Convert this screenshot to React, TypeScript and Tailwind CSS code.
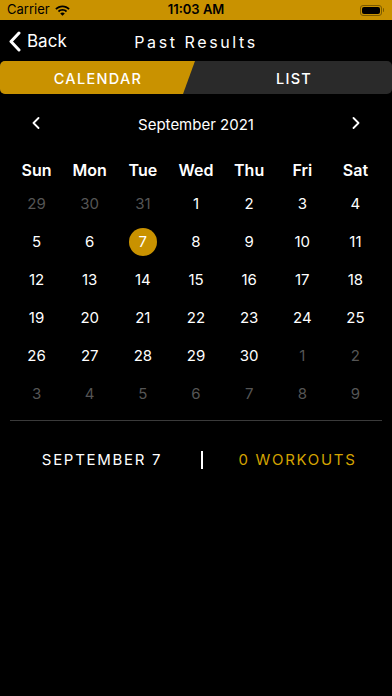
const GOLD = 'bg-[#c99200]'

type Day = { n: number; muted?: boolean }

const weeks: Day[][] = [
  [{ n: 29, muted: true }, { n: 30, muted: true }, { n: 31, muted: true }, { n: 1 }, { n: 2 }, { n: 3 }, { n: 4 }],
  [{ n: 5 }, { n: 6 }, { n: 7 }, { n: 8 }, { n: 9 }, { n: 10 }, { n: 11 }],
  [{ n: 12 }, { n: 13 }, { n: 14 }, { n: 15 }, { n: 16 }, { n: 17 }, { n: 18 }],
  [{ n: 19 }, { n: 20 }, { n: 21 }, { n: 22 }, { n: 23 }, { n: 24 }, { n: 25 }],
  [{ n: 26 }, { n: 27 }, { n: 28 }, { n: 29 }, { n: 30 }, { n: 1, muted: true }, { n: 2, muted: true }],
  [3, 4, 5, 6, 7, 8, 9].map((n) => ({ n, muted: true })),
]

const dayNames = ['Sun', 'Mon', 'Tue', 'Wed', 'Thu', 'Fri', 'Sat']

function StatusBar() {
  return (
    <div className={`relative flex h-5 items-center px-[7px] text-[13px] text-black ${GOLD}`}>
      <span className="font-normal">Carrier</span>
      {/* wifi */}
      <svg className="ml-[5px]" width="15" height="11" viewBox="0 0 15 11">
        <path d="M7.5 0.5C4.7 0.5 2.2 1.6 0.3 3.4l1.3 1.3C3.1 3.2 5.2 2.3 7.5 2.3s4.4 0.9 5.9 2.4l1.3-1.3C12.8 1.6 10.3 0.5 7.5 0.5z" fill="black" />
        <path d="M7.5 4C5.7 4 4.1 4.7 2.9 5.9l1.3 1.3C5 6.3 6.2 5.8 7.5 5.8s2.5 0.5 3.3 1.4l1.3-1.3C10.9 4.7 9.3 4 7.5 4z" fill="black" />
        <path d="M7.5 7.4c-0.9 0-1.7 0.4-2.3 1L7.5 10.7l2.3-2.3c-0.6-0.6-1.4-1-2.3-1z" fill="black" />
      </svg>
      <span className="absolute left-1/2 -translate-x-1/2 font-semibold">11:03 AM</span>
      <div className="ml-auto mr-[1px] flex items-center">
        <div className="flex h-[11px] w-[22px] items-center rounded-[3px] border border-[#7a5a00] p-[1px]">
          <div className="h-full w-full rounded-[2px] bg-black" />
        </div>
        <div className="ml-[1px] h-[4px] w-[1.5px] rounded-r-sm bg-[#7a5a00]" />
      </div>
    </div>
  )
}

function Chevron({ dir, className }: { dir: 'left' | 'right'; className?: string }) {
  return (
    <svg className={className} width="8" height="12" viewBox="0 0 8 12">
      <path
        d={dir === 'left' ? 'M6.5 1L1.5 6l5 5' : 'M1.5 1l5 5-5 5'}
        fill="none"
        stroke="white"
        strokeWidth="1.8"
        strokeLinecap="round"
        strokeLinejoin="round"
      />
    </svg>
  )
}

export default function App() {
  return (
    <div className="h-[696px] w-[392px] overflow-hidden bg-black font-['Inter','Liberation_Sans',sans-serif] text-white">
      <StatusBar />

      {/* Nav bar */}
      <div className="relative flex h-10 items-center pt-[3px]">
        <div className="ml-[9px] flex items-center gap-[6px]">
          <svg width="12" height="21" viewBox="0 0 12 21">
            <path d="M10 2L2 10.5 10 19" fill="none" stroke="white" strokeWidth="3" strokeLinecap="round" strokeLinejoin="round" />
          </svg>
          <span className="text-[17px]">Back</span>
        </div>
        <span className="absolute left-1/2 -translate-x-1/2 text-[16px] font-normal tracking-[2.6px]">Past Results</span>
      </div>

      {/* Segmented control */}
      <div className="mt-px flex h-[33px] overflow-hidden rounded-[5px] bg-[#2a2a2a]">
        <div className={`flex w-[196px] items-center justify-center pt-[2px] [clip-path:polygon(0_0,195px_0,183px_100%,0_100%)] ${GOLD}`}>
          <span className="text-[14.5px] font-medium tracking-[1.3px]">CALENDAR</span>
        </div>
        <div className="flex flex-1 items-center justify-center pt-[2px]">
          <span className="text-[14.5px] font-medium tracking-[1.3px]">LIST</span>
        </div>
      </div>

      {/* Month header */}
      <div className="flex h-[62px] items-center px-[32px]">
        <Chevron dir="left" className="-mt-1" />
        <span className="flex-1 text-center text-[15px]">September 2021</span>
        <Chevron dir="right" className="-mt-1" />
      </div>

      <div className="px-[10px]">
        <div className="grid h-[28px] grid-cols-7 items-center text-center text-[16px] font-semibold">
          {dayNames.map((d) => (
            <span key={d}>{d}</span>
          ))}
        </div>
        {weeks.map((week, i) => (
          <div key={i} className="grid h-[38px] grid-cols-7 items-center pt-[2px] text-center text-[15px]">
            {week.map((d, j) => {
              const selected = i === 1 && d.n === 7
              return (
                <div key={j} className="flex justify-center">
                  {selected ? (
                    <span className={`flex h-[28px] w-[28px] items-center justify-center rounded-full ${GOLD}`}>{d.n}</span>
                  ) : (
                    <span className={d.muted ? 'text-[#555555]' : ''}>{d.n}</span>
                  )}
                </div>
              )
            })}
          </div>
        ))}
      </div>

      <div className="mx-[10px] mt-[8px] h-px bg-[#3a3a3a]" />

      {/* Summary */}
      <div className="flex h-[76px] items-center pt-[2px] text-[15px] tracking-[1.7px]">
        <div className="flex w-[201px] justify-center pl-[3px]">SEPTEMBER 7</div>
        <div className="h-[18px] w-[2px] bg-white" />
        <div className="flex flex-1 justify-center text-[#d4a300]">0 WORKOUTS</div>
      </div>
    </div>
  )
}
